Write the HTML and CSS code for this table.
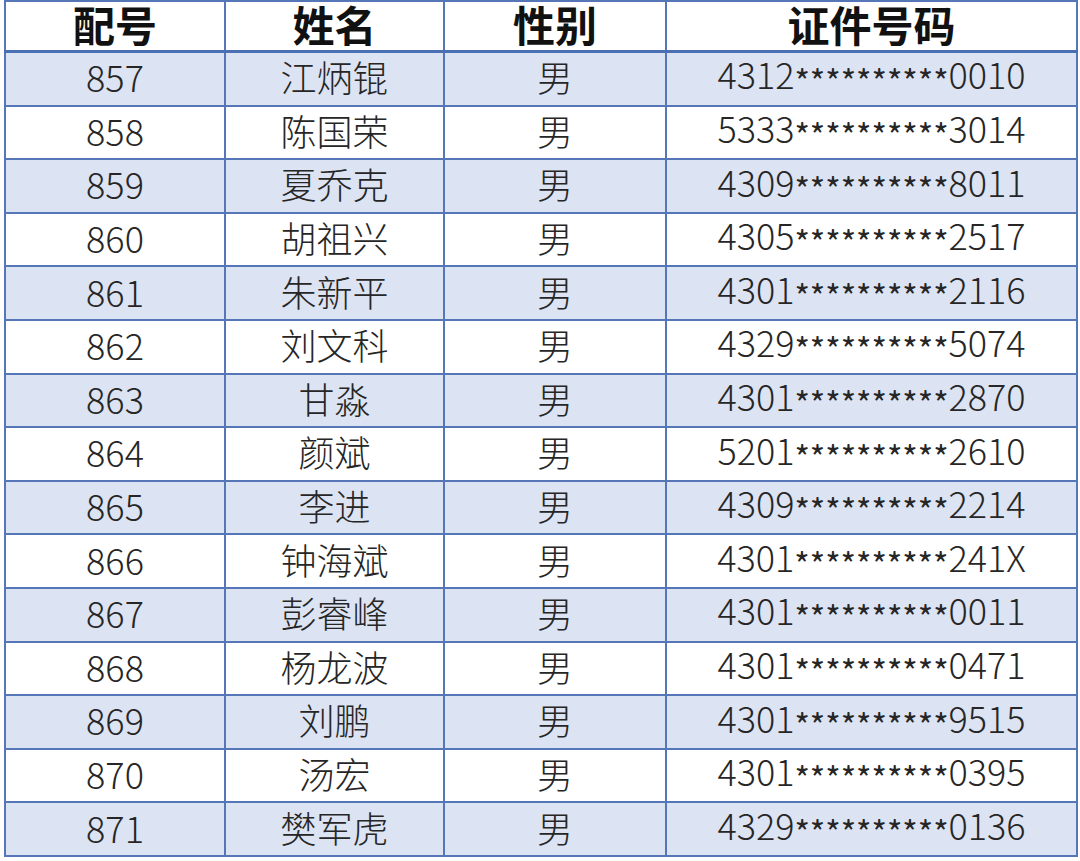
FILE: index.html
```html
<!DOCTYPE html>
<html lang="zh-CN">
<head>
<meta charset="utf-8">
<title>名单</title>
<link rel="stylesheet" href="styles.css">
</head>
<body>
<table class="roster">
  <colgroup>
    <col class="c-no">
    <col class="c-name">
    <col class="c-sex">
    <col class="c-id">
  </colgroup>
  <thead>
    <tr><th>配号</th><th>姓名</th><th>性别</th><th>证件号码</th></tr>
  </thead>
  <tbody>
    <tr><td>857</td><td>江炳锟</td><td>男</td><td>4312<span class="mask">**********</span>0010</td></tr>
    <tr><td>858</td><td>陈国荣</td><td>男</td><td>5333<span class="mask">**********</span>3014</td></tr>
    <tr><td>859</td><td>夏乔克</td><td>男</td><td>4309<span class="mask">**********</span>8011</td></tr>
    <tr><td>860</td><td>胡祖兴</td><td>男</td><td>4305<span class="mask">**********</span>2517</td></tr>
    <tr><td>861</td><td>朱新平</td><td>男</td><td>4301<span class="mask">**********</span>2116</td></tr>
    <tr><td>862</td><td>刘文科</td><td>男</td><td>4329<span class="mask">**********</span>5074</td></tr>
    <tr><td>863</td><td>甘淼</td><td>男</td><td>4301<span class="mask">**********</span>2870</td></tr>
    <tr><td>864</td><td>颜斌</td><td>男</td><td>5201<span class="mask">**********</span>2610</td></tr>
    <tr><td>865</td><td>李进</td><td>男</td><td>4309<span class="mask">**********</span>2214</td></tr>
    <tr><td>866</td><td>钟海斌</td><td>男</td><td>4301<span class="mask">**********</span>241X</td></tr>
    <tr><td>867</td><td>彭睿峰</td><td>男</td><td>4301<span class="mask">**********</span>0011</td></tr>
    <tr><td>868</td><td>杨龙波</td><td>男</td><td>4301<span class="mask">**********</span>0471</td></tr>
    <tr><td>869</td><td>刘鹏</td><td>男</td><td>4301<span class="mask">**********</span>9515</td></tr>
    <tr><td>870</td><td>汤宏</td><td>男</td><td>4301<span class="mask">**********</span>0395</td></tr>
    <tr><td>871</td><td>樊军虎</td><td>男</td><td>4329<span class="mask">**********</span>0136</td></tr>
  </tbody>
</table>
</body>
</html>
```
FILE: styles.css
```css
html, body {
  margin: 0;
  padding: 0;
  background: #ffffff;
}
body {
  font-family: "Noto Sans CJK SC", "Noto Sans", sans-serif;
  color: #262626;
}
.roster {
  margin: 0 0 0 4px;
  width: 1072px;
  border-collapse: collapse;
  table-layout: fixed;
}
.c-no { width: 220px; }
.c-name { width: 219px; }
.c-sex { width: 222px; }
.c-id { width: 411px; }
.roster th,
.roster td {
  border: 2px solid #5577b8;
  text-align: center;
  padding: 0;
  line-height: 1;
}
.roster th {
  height: 44px;
  padding-bottom: 4px;
  font-size: 42px;
  font-weight: 700;
  color: #111111;
  border-bottom: 3px solid #4b6fb3;
}
.roster td {
  height: 46.6px;
  padding-bottom: 5px;
  font-size: 36px;
  font-weight: 300;
}
.roster tbody tr:nth-child(odd) td {
  background: #dce3f3;
}
.roster tbody tr:nth-child(even) td {
  background: #ffffff;
}
.mask {
  font-size: 33px;
  font-weight: 400;
  vertical-align: -0.14em;
}
```
